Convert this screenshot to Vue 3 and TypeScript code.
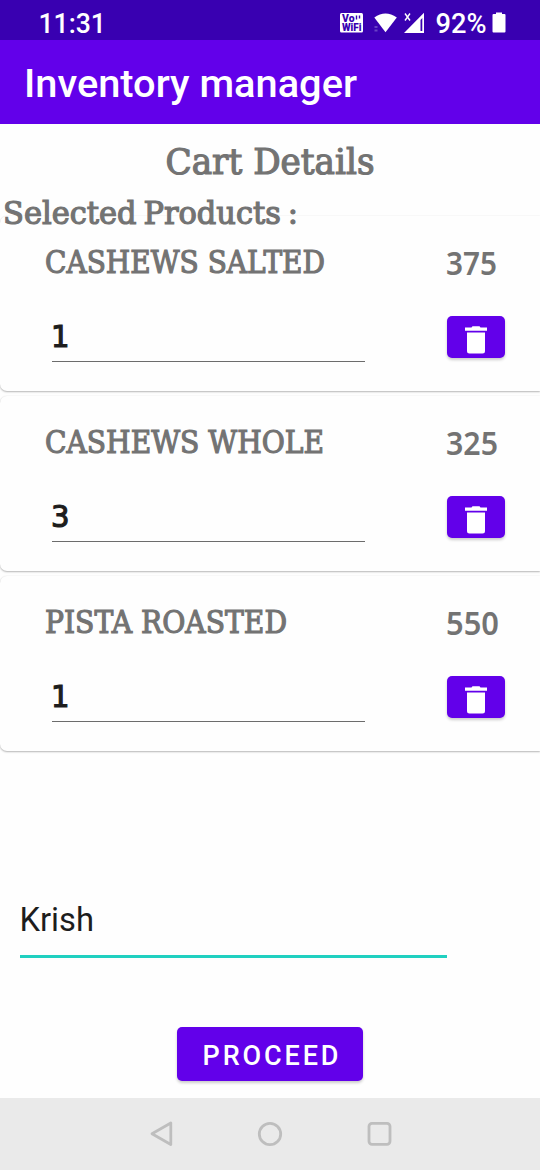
<script setup lang="ts">
interface CartItem {
  name: string
  nameWidth: number
  price: number
  priceWidth: number
  quantity: number
}

const items: CartItem[] = [
  { name: 'CASHEWS SALTED', nameWidth: 280, price: 375, priceWidth: 51, quantity: 1 },
  { name: 'CASHEWS WHOLE', nameWidth: 279, price: 325, priceWidth: 52, quantity: 3 },
  { name: 'PISTA ROASTED', nameWidth: 242, price: 550, priceWidth: 53, quantity: 1 },
]
</script>

<template>
  <div class="screen">
    <header class="status">
      <svg class="clock" width="80" height="40">
        <text x="0.5" y="33" textLength="67.5" lengthAdjust="spacingAndGlyphs">11:31</text>
      </svg>
      <svg class="indicators" width="172" height="40">
        <rect x="0" y="13" width="23" height="19.5" rx="1.5" fill="#fff" />
        <g class="badge">
          <text x="2" y="21.9" textLength="12.5" lengthAdjust="spacingAndGlyphs">Vo</text>
          <text x="2" y="30.7" textLength="19.5" lengthAdjust="spacingAndGlyphs">WiFi</text>
        </g>
        <path d="M16.5 15.5v4M19.5 15.5v3" stroke="#3900b1" stroke-width="1.4" />
        <path d="M34.3 17.5Q45.5 9.5 56.8 17.5L45.5 32.3Z" fill="#fff" />
        <path d="M36 26v2M36 29.5v2" stroke="#6840c5" stroke-width="3" />
        <path d="M65 13.5l5 7M70 13.5l-5 7" stroke="#fff" stroke-width="1.4" />
        <path fill-rule="evenodd" d="M84 12.7V33H64ZM80.5 20V31H82.3V18Z" fill="#fff" />
        <text x="95.5" y="33" textLength="51" lengthAdjust="spacingAndGlyphs">92%</text>
        <path d="M156 12.5h6v1.5h2.5q1 0 1 1V31.5q0 1-1 1h-11q-1 0-1-1V15q0-1 1-1h2.5Z" fill="#fff" />
      </svg>
    </header>

    <div class="appbar">
      <svg width="516" height="84">
        <text x="0" y="57.2" textLength="333" lengthAdjust="spacingAndGlyphs">Inventory manager</text>
      </svg>
    </div>

    <main class="content">
      <svg class="heading slab" width="540" height="68">
        <text x="165.5" y="49.5" textLength="209" lengthAdjust="spacingAndGlyphs">Cart Details</text>
      </svg>
      <svg class="section slab" width="540" height="24">
        <text x="3" y="31.5" textLength="295" lengthAdjust="spacingAndGlyphs">Selected Products :</text>
      </svg>

      <section class="cards">
        <article v-for="item in items" :key="item.name" class="card">
          <div class="details">
            <svg class="name slab" width="330" height="85">
              <text x="0" y="57.3" :textLength="item.nameWidth" lengthAdjust="spacingAndGlyphs">{{ item.name }}</text>
            </svg>
            <div class="quantity">
              <svg width="60" height="59.5">
                <text x="-1" y="46.3" textLength="18.5" lengthAdjust="spacingAndGlyphs">{{ item.quantity }}</text>
              </svg>
            </div>
          </div>
          <div class="side">
            <svg class="price" width="80" height="99.5">
              <text x="-1" y="59" :textLength="item.priceWidth" lengthAdjust="spacingAndGlyphs">{{ item.price }}</text>
            </svg>
            <button class="remove" aria-label="Remove">
              <svg width="58" height="42">
                <path d="M18 11.500h6.5l1-1.200h7l1 1.200H40v3.200H18ZM20 16.500h18v18.500q0 2.5-2.5 2.5h-13Q20 37.5 20 35Z" fill="#fff" />
              </svg>
            </button>
          </div>
        </article>
      </section>

      <div class="customer">
        <svg width="427" height="79">
          <text x="-0.5" y="55" textLength="74.5" lengthAdjust="spacingAndGlyphs">Krish</text>
        </svg>
      </div>

      <button class="proceed">
        <svg width="186" height="54">
          <text x="25.500" y="37.7" textLength="136" lengthAdjust="spacing">PROCEED</text>
        </svg>
      </button>
    </main>

    <nav class="navbar">
      <svg width="540" height="72">
        <g fill="none" stroke="#bebebe" stroke-width="2.8" stroke-linejoin="round">
          <path d="M152 35.7L170.8 25V46.5Z" />
          <circle cx="270" cy="36" r="10.7" />
          <rect x="369" y="25.3" width="21" height="21" rx="3" />
        </g>
      </svg>
    </nav>
  </div>
</template>

<style scoped>
.screen {
  display: flex;
  flex-direction: column;
  width: 540px;
  height: 1170px;
  overflow: hidden;
  background: #fefefe;
  font-family: Roboto, "Liberation Sans", sans-serif;
}
svg {
  display: block;
  overflow: visible;
}
.status {
  display: flex;
  justify-content: space-between;
  height: 40px;
  padding: 0 28px 0 38px;
  background: #3900b1;
}
.status text {
  fill: #fff;
  font-size: 27px;
  font-weight: 500;
}
.status .badge text {
  fill: #3900b1;
  font-size: 10px;
  font-weight: 900;
}
.appbar {
  height: 84px;
  padding-left: 24px;
  background: #6200ea;
}
.appbar text {
  fill: #fff;
  font-size: 39px;
  font-weight: 500;
}
.content {
  display: flex;
  flex-direction: column;
  align-items: flex-start;
  height: 974px;
}
.slab text {
  fill: #737373;
  stroke: #737373;
  stroke-width: 1.2px;
  font-family: "DejaVu Serif", serif;
}
.heading text {
  font-size: 34.5px;
}
.section {
  position: relative;
  z-index: 1;
}
.section text {
  font-size: 31px;
  word-spacing: -3px;
}
.cards {
  display: flex;
  flex-direction: column;
  gap: 5px;
  width: 540px;
}
.card {
  display: flex;
  justify-content: space-between;
  height: 175px;
  padding: 0 35px 0 45px;
  box-sizing: border-box;
  border-radius: 7px 0 0 7px;
  background: #fefefe;
  box-shadow: 0 1px 2px rgba(0, 0, 0, 0.28), 0 0 2px rgba(0, 0, 0, 0.06);
}
.name text {
  font-size: 31px;
}
.quantity {
  width: 313px;
  margin-left: 7px;
  border-bottom: 1px solid #6c6c6c;
}
.quantity text {
  fill: #1d1d1d;
  stroke: #1d1d1d;
  stroke-width: 1.2px;
  font-family: "DejaVu Sans", sans-serif;
  font-size: 30px;
}
.side {
  width: 58px;
}
.price text {
  fill: #737373;
  font-family: "Noto Sans", sans-serif;
  font-size: 32px;
  font-weight: 600;
}
button {
  display: block;
  padding: 0;
  border: 0;
  border-radius: 5px;
  background: #6200ea;
  box-shadow: 0 2px 3px rgba(0, 0, 0, 0.2);
  font-family: inherit;
}
.remove {
  width: 58px;
  height: 42px;
}
.customer {
  width: 427px;
  margin: 125px 0 0 20px;
  border-bottom: 3px solid #20d0c0;
}
.customer text {
  fill: #1d1d1d;
  font-size: 33.5px;
}
.proceed {
  width: 186px;
  height: 54px;
  margin: 69px 0 0 176.5px;
}
.proceed text {
  fill: #fff;
  font-size: 27px;
  font-weight: 500;
}
.navbar {
  height: 72px;
  background: #eaeaea;
}
</style>

<style>
body {
  margin: 0;
}
</style>
